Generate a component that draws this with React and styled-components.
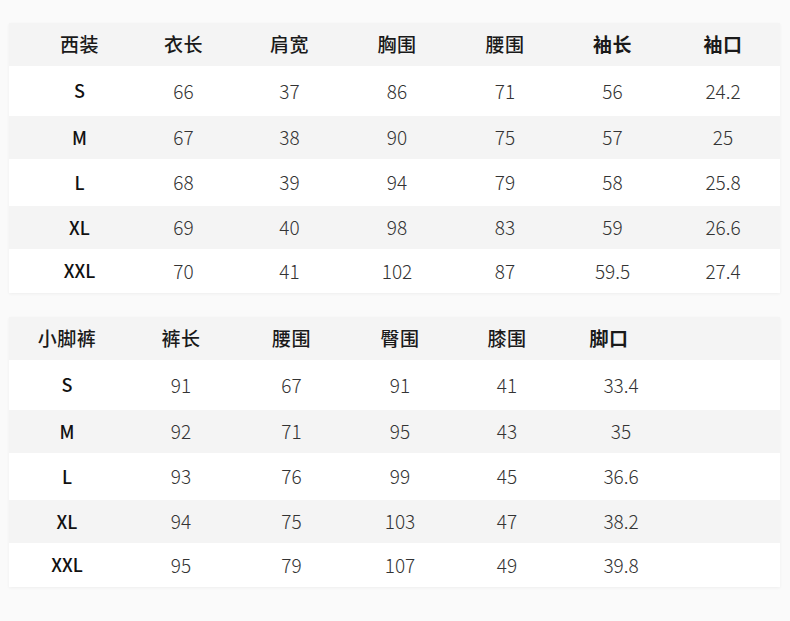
import styled, { createGlobalStyle } from "styled-components";

const GlobalStyle = createGlobalStyle`
  html, body {
    margin: 0;
    padding: 0;
    background: #fafafa;
  }
  body {
    font-family: "Noto Sans CJK SC", "Noto Sans", sans-serif;
  }
`;

const Page = styled.div`
  width: 790px;
  height: 621px;
  box-sizing: border-box;
  padding: 23px 10px 0 9px;
  display: flex;
  flex-direction: column;
  gap: 24px;
  background: #fafafa;
`;

const Card = styled.div`
  background: #fff;
  box-shadow: 0 1px 3px rgba(0, 0, 0, 0.05);
  padding-left: ${({ $indent }) => $indent}px;
`;

const Row = styled.div`
  display: grid;
  grid-template-columns: ${({ $cols }) => $cols};
  align-items: center;
  height: ${({ $h }) => $h}px;
  background: ${({ $shade }) => ($shade ? "#f4f4f4" : "#ffffff")};
  margin-left: ${({ $indent }) => -$indent}px;
  padding-left: ${({ $indent }) => $indent}px;
  line-height: 1;
`;

const HeadCell = styled.div`
  text-align: center;
  font-size: 19px;
  font-weight: ${({ $strong }) => ($strong ? 700 : 500)};
  color: #1a1a1a;
  padding-right: ${({ $shift }) => $shift || 0}px;
  letter-spacing: 0.5px;
  margin-top: -2px;
`;

const SizeCell = styled.div`
  text-align: center;
  font-size: 18px;
  font-weight: 500;
  color: #111;
  margin-top: -2px;
`;

const ValueCell = styled.div`
  text-align: center;
  font-size: 19px;
  font-weight: 300;
  color: #333;
  margin-top: -2px;
`;

const HEIGHTS = [50, 43, 47, 43, 44];

const suit = {
  indent: 19,
  cols: "103px 105px 107px 108px 108px 107px 1fr",
  head: [
    { t: "西装" },
    { t: "衣长" },
    { t: "肩宽" },
    { t: "胸围" },
    { t: "腰围" },
    { t: "袖长", strong: true },
    { t: "袖口", strong: true },
  ],
  rows: [
    ["S", "66", "37", "86", "71", "56", "24.2"],
    ["M", "67", "38", "90", "75", "57", "25"],
    ["L", "68", "39", "94", "79", "58", "25.8"],
    ["XL", "69", "40", "98", "83", "59", "26.6"],
    ["XXL", "70", "41", "102", "87", "59.5", "27.4"],
  ],
};

const pants = {
  indent: 0,
  cols: "116px 112px 109px 108px 106px 122px 1fr",
  head: [
    { t: "小脚裤" },
    { t: "裤长" },
    { t: "腰围" },
    { t: "臀围" },
    { t: "膝围" },
    { t: "脚口", strong: true, shift: 24 },
    { t: "" },
  ],
  rows: [
    ["S", "91", "67", "91", "41", "33.4", ""],
    ["M", "92", "71", "95", "43", "35", ""],
    ["L", "93", "76", "99", "45", "36.6", ""],
    ["XL", "94", "75", "103", "47", "38.2", ""],
    ["XXL", "95", "79", "107", "49", "39.8", ""],
  ],
};

function SizeTable({ data }) {
  return (
    <Card $indent={data.indent}>
      <Row $cols={data.cols} $h={43} $shade $indent={data.indent}>
        {data.head.map((h, i) => (
          <HeadCell key={i} $strong={h.strong} $shift={h.shift}>
            {h.t}
          </HeadCell>
        ))}
      </Row>
      {data.rows.map((r, i) => (
        <Row
          key={r[0]}
          $cols={data.cols}
          $h={HEIGHTS[i]}
          $shade={i % 2 === 1}
          $indent={data.indent}
        >
          <SizeCell>{r[0]}</SizeCell>
          {r.slice(1).map((v, j) => (
            <ValueCell key={j}>{v}</ValueCell>
          ))}
        </Row>
      ))}
    </Card>
  );
}

export default function App() {
  return (
    <>
      <GlobalStyle />
      <Page>
        <SizeTable data={suit} />
        <SizeTable data={pants} />
      </Page>
    </>
  );
}
